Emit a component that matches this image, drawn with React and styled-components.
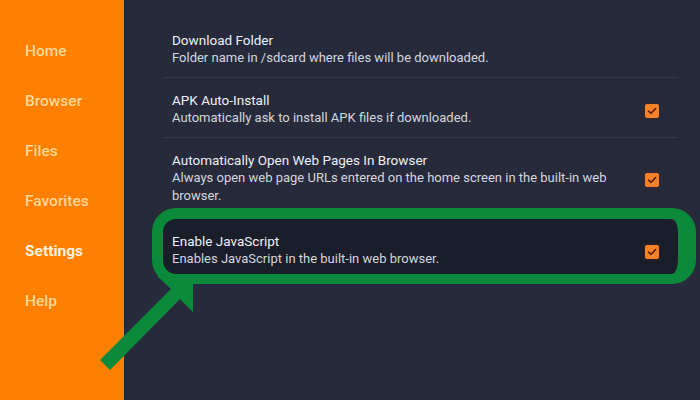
import React from "react";
import styled, { createGlobalStyle } from "styled-components";

const Global = createGlobalStyle`
  html, body { margin: 0; padding: 0; }
  body { font-family: Roboto, "Noto Sans", Arial, sans-serif; background: #262a3b; }
  * { box-sizing: border-box; }
`;

const Screen = styled.div`
  position: relative;
  display: flex;
  width: 700px;
  height: 400px;
  overflow: hidden;
  background: #262a3b;
`;

const Sidebar = styled.nav`
  width: 124px;
  flex: none;
  background: #ff7f00;
  padding-top: 26px;
  display: flex;
  flex-direction: column;
`;

const NavItem = styled.div`
  height: 50px;
  line-height: 50px;
  padding-left: 25px;
  font-size: 15.5px;
  font-weight: ${(p) => (p.$active ? 700 : 500)};
  color: ${(p) => (p.$active ? "#fff1dc" : "#ffd79a")};
`;

const Content = styled.main`
  flex: 1;
  padding: 18px 22px 0 39px;
  display: flex;
  flex-direction: column;
`;

const Row = styled.div`
  position: relative;
  display: flex;
  align-items: center;
  padding: 13px 19px ${(p) => (p.$focused ? "6px" : "10px")} 9px;
  margin-top: ${(p) => (p.$focused ? "3px" : "0")};
  border-bottom: 1px solid ${(p) => (p.$focused ? "transparent" : "#343a4d")};
  background: ${(p) => (p.$focused ? "#1a1e2a" : "transparent")};
  border-radius: ${(p) => (p.$focused ? "10px" : "0")};
`;

const Highlight = styled.div`
  position: absolute;
  left: -11px;
  top: -11px;
  right: -18px;
  bottom: -10px;
  border-style: solid;
  border-color: #0b8a3b;
  border-width: 11px 18px 10px 11px;
  border-radius: 24px;
  pointer-events: none;
`;

const Texts = styled.div`
  flex: 1;
  min-width: 0;
  padding-right: 18px;
`;

const Title = styled.div`
  font-size: 13.5px;
  line-height: 18px;
  color: #eef0f3;
`;

const Subtitle = styled.div`
  font-size: 13px;
  line-height: 18px;
  color: #d4d7dd;
`;

const Check = styled.span`
  flex: none;
  width: 14px;
  height: 14px;
  margin-top: 3px;
  border-radius: 2px;
  background: #f5822a;
  display: flex;
  align-items: center;
  justify-content: center;
  box-shadow: 0 0 0 1px rgba(90, 30, 0, 0.35);
`;

const ArrowLayer = styled.svg`
  position: absolute;
  left: 0;
  top: 0;
  pointer-events: none;
`;

const CheckBox = () => (
  <Check>
    <svg width="10" height="8" viewBox="0 0 10 8">
      <path d="M1.5 4 L4 6.3 L8.6 1.6" fill="none" stroke="#5b1f05" strokeWidth="1.6" strokeLinecap="round" strokeLinejoin="round" />
    </svg>
  </Check>
);

const nav = ["Home", "Browser", "Files", "Favorites", "Settings", "Help"];

const settings = [
  { title: "Download Folder", sub: "Folder name in /sdcard where files will be downloaded.", check: false },
  { title: "APK Auto-Install", sub: "Automatically ask to install APK files if downloaded.", check: true },
  {
    title: "Automatically Open Web Pages In Browser",
    sub: "Always open web page URLs entered on the home screen in the built-in web browser.",
    check: true,
  },
  { title: "Enable JavaScript", sub: "Enables JavaScript in the built-in web browser.", check: true, focused: true },
];

export default function App() {
  return (
    <>
      <Global />
      <Screen>
        <Sidebar>
          {nav.map((n) => (
            <NavItem key={n} $active={n === "Settings"}>
              {n}
            </NavItem>
          ))}
        </Sidebar>
        <Content>
          {settings.map((s) => (
            <Row key={s.title} $focused={s.focused}>
              <Texts>
                <Title>{s.title}</Title>
                <Subtitle>{s.sub}</Subtitle>
              </Texts>
              {s.check && <CheckBox />}
              {s.focused && <Highlight />}
            </Row>
          ))}
        </Content>
        <ArrowLayer width="700" height="400" viewBox="0 0 700 400">
          <polygon
            points="100,360 171,289 157,276 193,275 193,312 180,299 110,370"
            fill="#0b8a3b"
          />
        </ArrowLayer>
      </Screen>
    </>
  );
}
